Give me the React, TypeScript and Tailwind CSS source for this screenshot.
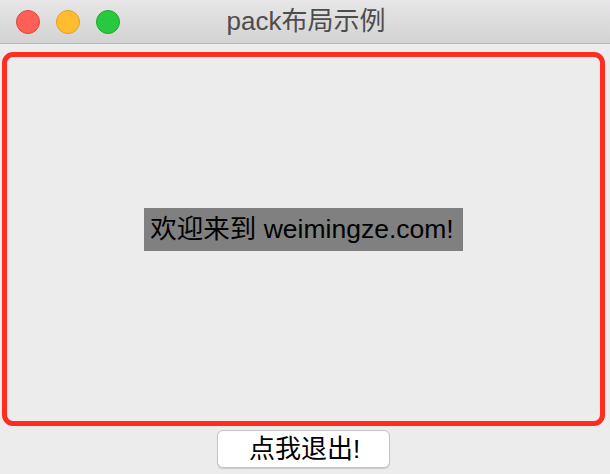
import React from 'react';

const font = '"Liberation Sans", "Noto Sans CJK SC", sans-serif';

function TrafficLights() {
  return (
    <div className="flex items-center gap-4 pl-4">
      <span className="h-6 w-6 rounded-full border border-[#e0443e] bg-[#fe5f57]" />
      <span className="h-6 w-6 rounded-full border border-[#dea123] bg-[#febc2e]" />
      <span className="h-6 w-6 rounded-full border border-[#1aab29] bg-[#28c840]" />
    </div>
  );
}

export default function App() {
  return (
    <div className="flex h-[474px] w-[610px] flex-col overflow-hidden bg-[#ececec]" style={{ fontFamily: font }}>
      <div className="relative flex h-[44px] shrink-0 items-center border-b border-[#b9b9b9] bg-gradient-to-b from-[#e8e6e8] to-[#d3d3d3]">
        <TrafficLights />
        <div className="absolute inset-0 flex items-center justify-center pl-[2px] text-[26px] text-[#4d4d4d]">
          pack布局示例
        </div>
      </div>

      <div className="flex flex-1 flex-col items-center pb-[6px] pl-[2px] pr-[5px] pt-[8px]">
        <div className="flex h-[374px] w-full items-center justify-center rounded-[11px] border-[5px] border-[#ff2d20] pb-[19px]">
          <div className="bg-[#808080] pl-[6px] pr-[9px] py-[5px] text-[26.5px] leading-[33px] text-black">
            欢迎来到 weimingze.com!
          </div>
        </div>
        <button className="mt-[4px] flex h-[38px] w-[173px] items-center justify-center rounded-[6px] border border-[#c4c4c4] bg-white pl-[2px] text-[26px] text-black shadow-[0_1px_1px_rgba(0,0,0,0.15)]">
          点我退出!
        </button>
      </div>
    </div>
  );
}
